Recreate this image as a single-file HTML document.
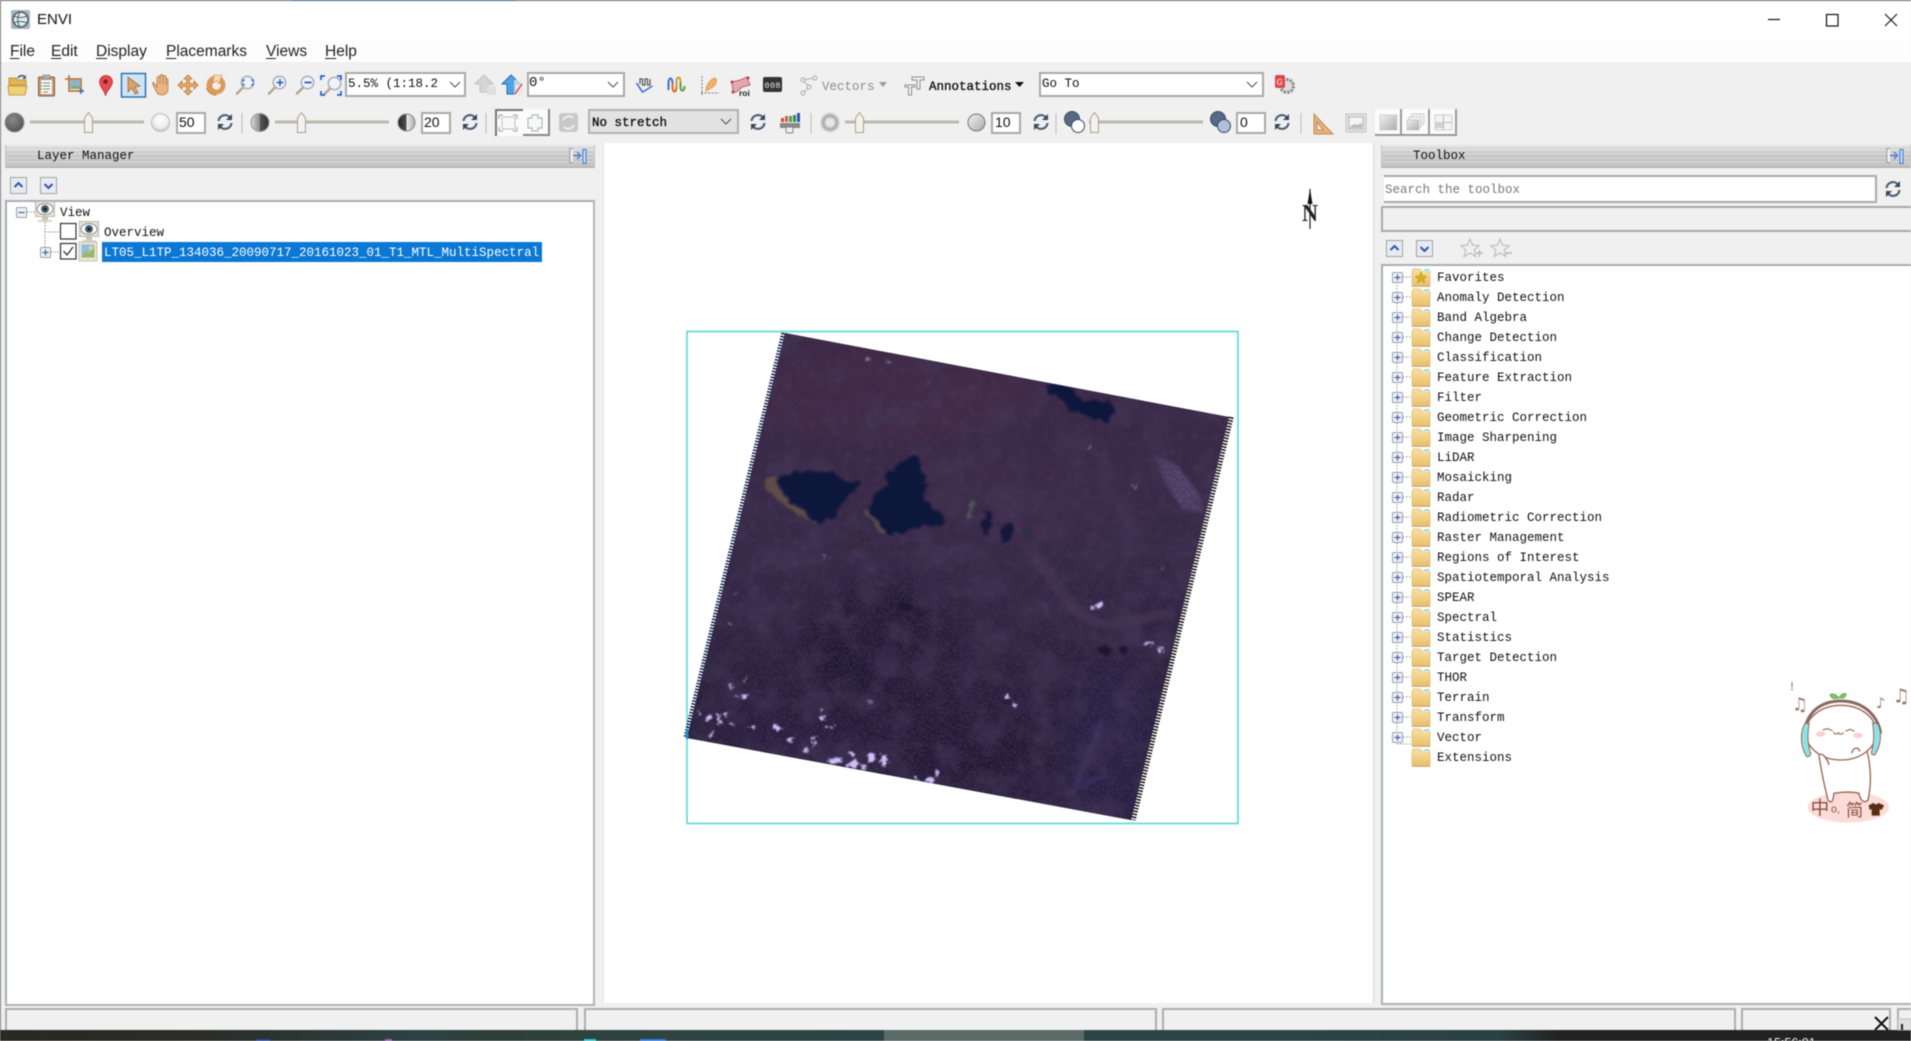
<!DOCTYPE html>
<html lang="en"><head><meta charset="utf-8"><title>ENVI</title>
<style>
html,body{margin:0;padding:0;width:1911px;height:1041px;overflow:hidden;background:#f0f0f0}
#r{position:absolute;left:0;top:0;width:1911px;height:1041px;overflow:hidden;background:#f0f0f0;filter:blur(.45px)}
#r div{position:absolute;box-sizing:border-box}
.t{font:12.5px/20px "Liberation Mono",monospace;color:#111;white-space:pre;margin-top:1px}
.m{font:15.5px/20px "Liberation Sans",sans-serif;color:#222;white-space:pre;top:42px}
.m u{text-underline-offset:2px}
.hd{background:linear-gradient(180deg,rgba(255,255,255,.35),rgba(0,0,0,.03) 50%,rgba(0,0,0,.05)),repeating-linear-gradient(180deg,#dadada 0 2px,#cbcbcb 2px 4px);border:1px solid #c4c4c4;border-bottom:2px solid #b4b4b4;border-top:1px solid #eee}
.box{background:#fff;border:2px solid #a9a9a9}
.tree{background:#fff;border:2px solid #a9adb3;border-right-color:#b4b4b4;border-bottom-color:#b0b0b0}
.st{border:2px solid #adadad;border-bottom:0;background:#f0f0f0;top:1008px;height:24px}
.n{font:14px/20px "Liberation Sans",sans-serif;color:#111;white-space:pre;top:112px}
svg{position:absolute;left:0;top:0}
</style></head><body>
<div id="r">
<!-- title + menu -->
<div style="left:0;top:0;width:1911px;height:40px;background:#fff"></div>
<div style="left:0;top:40px;width:1911px;height:22px;background:#fdfdfd"></div>
<div style="left:0;top:0;width:1911px;height:1px;background:#666"></div>
<div style="left:292px;top:0;width:224px;height:1px;background:#25527a"></div>
<div style="left:0;top:0;width:1px;height:1030px;background:#777"></div>
<div style="left:37px;top:10px;font:15px/20px 'Liberation Sans',sans-serif;color:#111">ENVI</div>
<div class="m" style="left:10px"><u>F</u>ile</div>
<div class="m" style="left:51px"><u>E</u>dit</div>
<div class="m" style="left:96px"><u>D</u>isplay</div>
<div class="m" style="left:166px"><u>P</u>lacemarks</div>
<div class="m" style="left:266px"><u>V</u>iews</div>
<div class="m" style="left:325px"><u>H</u>elp</div>

<!-- canvas -->
<div style="left:603px;top:143px;width:771px;height:860px;background:#fff;border-left:1px solid #e6e6e6;border-right:1px solid #d8d8d8"></div>

<!-- combos -->
<div class="box" style="left:345px;top:72px;width:121px;height:25px"></div>
<div class="t" style="left:348px;top:73px;width:92px;overflow:hidden">5.5% (1:18.2)</div>
<div class="box" style="left:527px;top:72px;width:98px;height:25px"></div>
<div class="t" style="left:529px;top:72px;font-size:14px">0°</div>
<div class="box" style="left:1039px;top:72px;width:225px;height:25px"></div>
<div class="t" style="left:1042px;top:73px">Go To</div>
<div style="left:588px;top:109px;width:151px;height:25px;background:#e2e2e2;border:2px solid #b2b2b2"></div>
<div class="t" style="left:592px;top:112px;-webkit-text-stroke:.35px #111">No stretch</div>
<div class="t" style="left:822px;top:76px;color:#8d8d8d">Vectors</div>
<div class="t" style="left:929px;top:76px;color:#111;-webkit-text-stroke:.35px #111">Annotations</div>

<!-- inputs -->
<div class="box" style="left:176px;top:112px;width:30px;height:22px"></div><div class="n" style="left:179px">50</div>
<div class="box" style="left:421px;top:112px;width:30px;height:22px"></div><div class="n" style="left:424px">20</div>
<div class="box" style="left:991px;top:112px;width:30px;height:22px"></div><div class="n" style="left:995px">10</div>
<div class="box" style="left:1236px;top:112px;width:30px;height:22px"></div><div class="n" style="left:1240px">0</div>
<!-- toggle buttons -->
<div style="left:495px;top:109px;width:28px;height:27px;background:#fbfbfb;border-left:2px solid #777;border-top:2px solid #777"></div>
<div style="left:523px;top:109px;width:27px;height:27px;background:#fbfbfb;border-right:2px solid #888;border-bottom:2px solid #888"></div>
<div style="left:1375px;top:109px;width:27px;height:27px;background:#fbfbfb;border-right:2px solid #999;border-bottom:2px solid #999"></div>
<div style="left:1402px;top:109px;width:28px;height:27px;background:#fbfbfb;border-right:2px solid #999;border-bottom:2px solid #999"></div>
<div style="left:1430px;top:109px;width:27px;height:27px;background:#fbfbfb;border-right:2px solid #999;border-bottom:2px solid #999"></div>

<!-- Left panel -->
<div class="hd" style="left:5px;top:144px;width:590px;height:24px"></div>
<div class="t" style="left:37px;top:145px">Layer Manager</div>
<div class="tree" style="left:5px;top:200px;width:590px;height:806px"></div>
<div style="left:102px;top:242px;width:440px;height:20px;background:#0a78d4"></div>
<div class="t" style="left:60px;top:202px">View</div>
<div class="t" style="left:104px;top:222px">Overview</div>
<div class="t" style="left:104px;top:242px;color:#fff">LT05_L1TP_134036_20090717_20161023_01_T1_MTL_MultiSpectral</div>

<!-- Right panel -->
<div class="hd" style="left:1381px;top:144px;width:530px;height:24px"></div>
<div class="t" style="left:1413px;top:145px">Toolbox</div>
<div style="left:1384px;top:175px;width:493px;height:28px;background:#fff;border-top:2px solid #a9a9a9;border-right:2px solid #a9a9a9;border-bottom:2px solid #a9a9a9"></div>
<div class="t" style="left:1385px;top:179px;color:#777">Search the toolbox</div>
<div style="left:1381px;top:206px;width:530px;height:26px;border:2px solid #a9a9a9;border-right:0;background:#f0f0f0"></div>
<div class="tree" style="left:1381px;top:264px;width:532px;height:741px"></div>
<div class="t" style="left:1437px;top:267px">Favorites</div>
<div class="t" style="left:1437px;top:287px">Anomaly Detection</div>
<div class="t" style="left:1437px;top:307px">Band Algebra</div>
<div class="t" style="left:1437px;top:327px">Change Detection</div>
<div class="t" style="left:1437px;top:347px">Classification</div>
<div class="t" style="left:1437px;top:367px">Feature Extraction</div>
<div class="t" style="left:1437px;top:387px">Filter</div>
<div class="t" style="left:1437px;top:407px">Geometric Correction</div>
<div class="t" style="left:1437px;top:427px">Image Sharpening</div>
<div class="t" style="left:1437px;top:447px">LiDAR</div>
<div class="t" style="left:1437px;top:467px">Mosaicking</div>
<div class="t" style="left:1437px;top:487px">Radar</div>
<div class="t" style="left:1437px;top:507px">Radiometric Correction</div>
<div class="t" style="left:1437px;top:527px">Raster Management</div>
<div class="t" style="left:1437px;top:547px">Regions of Interest</div>
<div class="t" style="left:1437px;top:567px">Spatiotemporal Analysis</div>
<div class="t" style="left:1437px;top:587px">SPEAR</div>
<div class="t" style="left:1437px;top:607px">Spectral</div>
<div class="t" style="left:1437px;top:627px">Statistics</div>
<div class="t" style="left:1437px;top:647px">Target Detection</div>
<div class="t" style="left:1437px;top:667px">THOR</div>
<div class="t" style="left:1437px;top:687px">Terrain</div>
<div class="t" style="left:1437px;top:707px">Transform</div>
<div class="t" style="left:1437px;top:727px">Vector</div>
<div class="t" style="left:1437px;top:747px">Extensions</div>

<!-- status -->
<div class="st" style="left:5px;width:573px"></div>
<div class="st" style="left:584px;width:573px"></div>
<div class="st" style="left:1162px;width:574px"></div>
<div class="st" style="left:1741px;width:150px"></div>
<div class="st" style="left:1897px;width:20px"></div>

<!-- taskbar -->
<div style="left:0;top:1030px;width:1911px;height:11px;background:linear-gradient(90deg,#2b2924 0,#2a2d28 200px,#2d4243 420px,#2e3f38 500px,#2f4544 700px,#2d4444 1300px,#2b4041 1500px,#222 1560px,#222 100%)"></div>
<div style="left:884px;top:1030px;width:200px;height:11px;background:#5c6a68"></div>
<div style="left:1767px;top:1036px;color:#eee;font:12.5px/14px 'Liberation Sans',sans-serif;white-space:pre">15:56:01</div>
<div style="left:256px;top:1039px;width:14px;height:2px;background:#26479c"></div>
<div style="left:385px;top:1039px;width:7px;height:2px;background:#a45ac0"></div>
<div style="left:584px;top:1039px;width:12px;height:2px;background:#28c8d8"></div>
<div style="left:640px;top:1039px;width:26px;height:2px;background:#2a7ae4"></div>

<svg width="1911" height="1041" viewBox="0 0 1911 1041" xmlns="http://www.w3.org/2000/svg">
<defs>
<linearGradient id="fg" x1="0" y1="0" x2="0" y2="1"><stop offset="0" stop-color="#f8e2a4"/><stop offset="1" stop-color="#e8c06a"/></linearGradient>
<linearGradient id="sat" x1="0" y1="0" x2="0" y2="1"><stop offset="0" stop-color="#472e4e"/><stop offset=".45" stop-color="#3c2d4e"/><stop offset=".75" stop-color="#2a2140"/><stop offset="1" stop-color="#2b2244"/></linearGradient>
<radialGradient id="ball" cx=".4" cy=".35" r=".8"><stop offset="0" stop-color="#8a8a8a"/><stop offset="1" stop-color="#4a4a4a"/></radialGradient>
<radialGradient id="wball" cx=".5" cy=".35" r=".7"><stop offset="0" stop-color="#fff"/><stop offset=".6" stop-color="#eee"/><stop offset="1" stop-color="#bbb"/></radialGradient>
<linearGradient id="hcirc" x1="0" x2="1"><stop offset="0" stop-color="#ddd"/><stop offset=".5" stop-color="#888"/><stop offset=".5" stop-color="#555"/><stop offset="1" stop-color="#333"/></linearGradient>
<linearGradient id="ccirc" x1="0" x2="1"><stop offset="0" stop-color="#222"/><stop offset=".5" stop-color="#555"/><stop offset=".5" stop-color="#eee"/><stop offset="1" stop-color="#aaa"/></linearGradient>
<linearGradient id="gr" x1="0" y1="0" x2="1" y2="1"><stop offset="0" stop-color="#f2f2f2"/><stop offset="1" stop-color="#aaa"/></linearGradient>
<clipPath id="q"><polygon points="785,333 1229,417 1131,820 687,738"/></clipPath>
<filter id="nz" x="0" y="0" width="100%" height="100%"><feTurbulence type="fractalNoise" baseFrequency=".42" numOctaves="2" seed="7"/><feColorMatrix values="0 0 0 0 .05 0 0 0 0 .03 0 0 0 0 .08 2.6 0 0 0 -.95"/></filter>
<filter id="nc" x="0" y="0" width="100%" height="100%"><feTurbulence type="fractalNoise" baseFrequency=".035" numOctaves="4" seed="12"/><feColorMatrix values="0 0 0 0 .06 0 0 0 0 .04 0 0 0 0 .1 2.8 0 0 0 -1.1"/></filter>
<filter id="nl" x="0" y="0" width="100%" height="100%"><feTurbulence type="fractalNoise" baseFrequency=".12" numOctaves="2" seed="21"/><feColorMatrix values="0 0 0 0 .5 0 0 0 0 .4 0 0 0 0 .65 1.6 0 0 0 -.72"/></filter>
<filter id="b1" x="-30%" y="-30%" width="160%" height="160%"><feGaussianBlur stdDeviation="1"/></filter>
<filter id="b4" x="-50%" y="-50%" width="200%" height="200%"><feGaussianBlur stdDeviation="5"/></filter>
<filter id="b12" x="-60%" y="-60%" width="220%" height="220%"><feGaussianBlur stdDeviation="26"/></filter>
<filter id="lk" x="-10%" y="-10%" width="120%" height="120%"><feTurbulence type="fractalNoise" baseFrequency=".05" numOctaves="3" seed="5" result="n"/><feDisplacementMap in="SourceGraphic" in2="n" scale="22" xChannelSelector="R" yChannelSelector="G"/><feGaussianBlur stdDeviation="3.5"/></filter>
<filter id="cl" x="-5%" y="-5%" width="110%" height="110%"><feTurbulence type="fractalNoise" baseFrequency=".09" numOctaves="3" seed="9" result="n"/><feDisplacementMap in="SourceGraphic" in2="n" scale="28" xChannelSelector="R" yChannelSelector="G"/><feGaussianBlur stdDeviation="2.2"/></filter>
<symbol id="folder" viewBox="0 0 20 19" width="20" height="19"><path d="M1 4V18H19V3H11L9 1H2Z" fill="url(#fg)" stroke="#d8b878" stroke-width=".7"/><path d="M11 2.500L17 1l2 2-6 1z" fill="#e4f4f8"/><path d="M13 2.300l5-.6" stroke="#58c0d0" stroke-width="1"/><path d="M1 18.400H19" stroke="#b89858" stroke-width=".8"/></symbol>
<symbol id="exp" viewBox="0 0 11 11" width="11" height="11"><rect x=".5" y=".5" width="10" height="10" rx="1" fill="#eef0f4" stroke="#9aa0aa"/><path d="M2.500 5.500h6M5.500 2.500v6" stroke="#4460a8" stroke-width="1.200"/></symbol>
<symbol id="col" viewBox="0 0 11 11" width="11" height="11"><rect x=".5" y=".5" width="10" height="10" rx="1" fill="#eef0f4" stroke="#9aa0aa"/><path d="M2.500 5.500h6" stroke="#4460a8" stroke-width="1.200"/></symbol>
<symbol id="ref" viewBox="0 0 18 18" width="18" height="18"><path d="M2.500 8A6.500 6.500 0 0 1 14 4.500" fill="none" stroke="#4b6278" stroke-width="2.200"/><path d="M15.500 10A6.500 6.500 0 0 1 4 13.500" fill="none" stroke="#4b6278" stroke-width="2.200"/><path d="M16 1v6h-6z" fill="#33485e"/><path d="M2 17v-6h6z" fill="#33485e"/></symbol>
<symbol id="mag" viewBox="0 0 20 20" width="20" height="20"><circle cx="12.500" cy="7.500" r="6.200" fill="#eef3f8" stroke="#a9b3be" stroke-width="1.600"/><path d="M8 12.500L2 18.500" stroke="#b9a68e" stroke-width="2.600" stroke-linecap="round"/></symbol>
<symbol id="thumb" viewBox="0 0 9 21" width="9" height="21"><path d="M4.500 .5L8.500 6V20.500H.5V6Z" fill="#f2f2ec" stroke="#a5a292"/></symbol>
<symbol id="dock" viewBox="0 0 19 18" width="19" height="18"><path d="M4 15.500H.8V1.500H4" fill="#eee" stroke="#999"/><path d="M4 8.500h7M8 5l3.500 3.500L8 12" fill="none" stroke="#4a80d8" stroke-width="1.400"/><rect x="14" y="2.500" width="3" height="14" fill="#cfe0f6" stroke="#3a78d8"/></symbol>
<symbol id="chev" viewBox="0 0 12 8" width="12" height="8"><path d="M1 1l5 5 5-5" fill="none" stroke="#555" stroke-width="1.100"/></symbol>
<symbol id="btnu" viewBox="0 0 17 17" width="17" height="17"><rect x=".5" y=".5" width="16" height="16" fill="#e8ebf2" stroke="#a2a2a8"/><path d="M4.500 10l4-4 4 4" fill="none" stroke="#2f56b0" stroke-width="2"/></symbol>
<symbol id="btnd" viewBox="0 0 17 17" width="17" height="17"><rect x=".5" y=".5" width="16" height="16" fill="#e8ebf2" stroke="#a2a2a8"/><path d="M4.500 7l4 4 4-4" fill="none" stroke="#2f56b0" stroke-width="2"/></symbol>
<symbol id="eye" viewBox="0 0 20 22" width="20" height="22"><rect x=".5" y=".5" width="19" height="15" fill="#e8e4da" stroke="#bcb8ac"/><ellipse cx="10" cy="8" rx="8" ry="5.500" fill="#fff" stroke="#888"/><circle cx="10" cy="8" r="4" fill="#4a6272"/><circle cx="10" cy="8" r="1.600" fill="#17232c"/><rect x="7" y="16" width="6" height="3" fill="#c8c4b8"/><rect x="3" y="19" width="14" height="2" fill="#d8d4c8"/></symbol>
<symbol id="star" viewBox="0 0 20 20" width="20" height="20"><path d="M10 1l2.600 6.200 6.600.5-5 4.300 1.600 6.500L10 15l-5.800 3.500 1.600-6.500-5-4.300 6.600-.5z" fill="#f0f0f0" stroke="#c4c4c4" stroke-width="1.400"/></symbol>
</defs>

<!-- ENVI icon -->
<rect x="11" y="10" width="19" height="19" rx="2" fill="#a8b4bc"/><circle cx="20.500" cy="19.500" r="7.500" fill="#e8ecee" stroke="#47606e" stroke-width="1.500"/><path d="M13 16c6 2 10 2 15 0M20 12c-3 5-3 10 0 15M13.500 23c4-2 9-2 14 0" fill="none" stroke="#47606e"/>
<!-- win controls -->
<path d="M1768 19.500h12" stroke="#111" stroke-width="1.200"/>
<rect x="1826.500" y="14.500" width="11.500" height="11.500" fill="none" stroke="#111" stroke-width="1.200"/>
<path d="M1885 14l12 12M1897 14l-12 12" stroke="#111" stroke-width="1.100"/>

<!-- Toolbar row 1 -->
<g><path d="M9 78h7l2 2h8v5H9z" fill="#e2b653" stroke="#a98534" stroke-width=".8"/><path d="M8 86h19l-2 9H9z" fill="#f0d072" stroke="#b38d3a" stroke-width=".8"/><path d="M18 78c2-3 5-3 7-1" fill="none" stroke="#4d6578" stroke-width="1.800"/><path d="M26 75v4h-4z" fill="#4d6578"/></g>
<g><rect x="38.500" y="77" width="16" height="19" rx="1" fill="#c89878" stroke="#8a5a3a"/><rect x="41" y="80" width="11" height="14" fill="#f8f8f4"/><rect x="43" y="75" width="7" height="4" fill="#a9afb4" stroke="#777" stroke-width=".5"/><path d="M43 83h7M43 86h7M43 89h7M43 92h5" stroke="#7a8a78"/><path d="M41 83h1M41 86h1M41 89h1" stroke="#3ca050"/></g>
<g><rect x="70" y="80" width="10" height="9" fill="#8fb4d2"/><path d="M70 89l4-4 3 2 3-2v4z" fill="#86a86c"/><path d="M65 79h16v13M69 75v16h15" fill="none" stroke="#b87a44" stroke-width="1.700"/><path d="M81 88v6M79 91h5" stroke="#3a6ac0" stroke-width="1.500"/></g>
<g><path d="M105.500 96c-1-6-6-9-6-14a6 6 0 0 1 13 0c0 5-6 8-7 14z" fill="#e84a4c" stroke="#b02a2c" stroke-width=".7"/><circle cx="105.500" cy="81.500" r="2.300" fill="#7a2030"/></g>
<g><rect x="121.500" y="73.500" width="24" height="23.500" fill="#cfe4f7" stroke="#1d6fb2" stroke-width="1.400"/><path d="M128 77v15l4-4 3 6 3-1-3-6 5-1z" fill="#dba467" stroke="#a36c34" stroke-width=".8"/></g>
<g><path d="M155 84c-2-3-3-1-2 1l3 6c1 3 3 4 6 4s6-2 6-6v-9c0-2-2-2-2 0v5-8c0-2-3-2-3 0v7-8c0-2-3-2-3 0v8-6c0-2-3-2-3 0v9z" fill="#e9b583" stroke="#b37a48" stroke-width=".8"/></g>
<g><path d="M188 75l4 4h-2.500v4.500H194V81l4 4-4 4v-2.500h-4.500V91H192l-4 4-4-4h2.500v-4.500H182V89l-4-4 4-4v2.500h4.500V79H184z" fill="#e9a862" stroke="#b67c3c" stroke-width=".8"/></g>
<g><circle cx="216" cy="85" r="9.500" fill="#dd9a58"/><circle cx="216.500" cy="85.500" r="4.200" fill="#f4f0e8"/><path d="M214 75h8l-3 9-2-3-4 2z" fill="#f6d8b4" stroke="#c98a4a" stroke-width=".6"/><path d="M206.500 88c2 5 6 7 10 7" fill="none" stroke="#b4743a"/></g>
<use href="#mag" x="235" y="75"/><path d="M244 80h-2v2M250 80h2v2M244 85h-2v-2M250 85h2v-2" fill="none" stroke="#3358c0" transform="translate(1 0)"/>
<use href="#mag" x="267" y="75"/><path d="M276.500 82.500h7M280 79v7" stroke="#3358c0" stroke-width="1.500"/>
<use href="#mag" x="295" y="75"/><path d="M304.500 82.500h7" stroke="#3358c0" stroke-width="1.800"/>
<use href="#mag" x="322" y="76"/><path d="M321 80v-4h4M341 80v-4h-4M321 91v4h4M341 91v4h-4" fill="none" stroke="#2b63d8" stroke-width="1.800"/>
<use href="#chev" x="449" y="81"/><use href="#chev" x="607" y="81"/><use href="#chev" x="1246" y="81"/><use href="#chev" x="720" y="118"/>
<g><path d="M484 75l-9 9h5v8h8v-8h5z" fill="#d6d6d6" stroke="#c0c0c0"/><rect x="487" y="86" width="9" height="9" fill="#e0e0e0"/></g>
<g><path d="M511 75l-9 9h5v10h8V84h5z" fill="#4fa3e6" stroke="#1f6db0"/><path d="M514 80h9v15h-9z" fill="#e8e8e8" opacity=".75"/><path d="M515 94l7-10" stroke="#d24a3a" stroke-width="1.400"/></g>
<g fill="none"><path d="M640 84v-5h2.500v6h2.500v-6h2.500v6h2.500v-6" stroke="#555" stroke-width="1.200"/><path d="M636.500 83l6 9 10-6" stroke="#4a70d8" stroke-width="1.600"/></g>
<g fill="none" stroke-width="2"><path d="M668.500 90v-7c0-6 4-6 4 0" stroke="#3d70d8"/><path d="M672.500 83v4c0 6 4 6 4 0" stroke="#e06a20"/><path d="M676.500 87v-5c0-6 4-6 4 0" stroke="#c9a03a"/><path d="M680.500 82v5c0 5 4 5 4-1" stroke="#5aa040"/></g>
<path d="M702 76v19M701 93h18" stroke="#777" stroke-dasharray="2 1.500"/><path d="M706 91c0-5 4-12 9-13 3 2 1 8-4 10z" fill="#f2b066" stroke="#e8994e"/>
<path d="M732 82l8-2 7-3 3 8-8 2-4 4-5 2z" fill="#e4a8ae" stroke="#bc6472"/><circle cx="732" cy="82" r="1.500" fill="#c03a50"/><circle cx="748" cy="78" r="1.500" fill="#c03a50"/><circle cx="733" cy="92" r="1.500" fill="#c03a50"/>
<text x="739" y="96" font-family="Liberation Sans,sans-serif" font-size="8.500" font-weight="bold" fill="#222">roi</text>
<rect x="763" y="77" width="19" height="15" rx="2" fill="#333"/><text x="764.500" y="88" font-family="Liberation Mono,monospace" font-size="8.500" fill="#eee" textLength="16">008</text>
<path d="M803 80l12-2M803 80l6 7-6 6" fill="none" stroke="#b8b8b8" stroke-width="1.200"/><circle cx="803" cy="80" r="2" fill="#f0f0f0" stroke="#aaa"/><circle cx="815" cy="78" r="2" fill="#f0f0f0" stroke="#aaa"/><circle cx="809" cy="87" r="2" fill="#f0f0f0" stroke="#aaa"/><circle cx="803" cy="93" r="2" fill="#f0f0f0" stroke="#aaa"/>
<path d="M879 82h8l-4 5z" fill="#9a9a9a"/>
<path d="M912 77h12v3h-4v9h-3v-9h-5zM905 85h10v2h-3.500v8h-3v-8H905z" fill="#f4f4f4" stroke="#8d8d8d"/>
<path d="M1015 82h9l-4.500 5z" fill="#111"/>
<!-- red gear -->
<circle cx="1287" cy="86" r="6.500" fill="#ddd" stroke="#8d8d8d" stroke-width="3" stroke-dasharray="2.500 1.200"/><rect x="1275" y="75" width="10" height="13" rx="2" fill="#e0454a"/><text x="1276.500" y="85" font-family="Liberation Sans,sans-serif" font-size="8" fill="#fff">G</text>

<!-- row 2 -->
<circle cx="14.500" cy="122.500" r="9.500" fill="url(#ball)" stroke="#999"/>
<rect x="30" y="120.500" width="114" height="3" fill="#bcb9ac"/><use href="#thumb" x="84" y="112"/>
<circle cx="160.500" cy="122.500" r="9" fill="url(#wball)" stroke="#bbb"/>
<use href="#ref" x="216" y="113"/><path d="M242 113v21" stroke="#bbb"/>
<circle cx="260" cy="122.500" r="9" fill="url(#hcirc)" stroke="#999"/>
<rect x="275" y="120.500" width="114" height="3" fill="#bcb9ac"/><use href="#thumb" x="297" y="112"/>
<circle cx="406.500" cy="122.500" r="8.500" fill="url(#ccirc)" stroke="#888"/>
<use href="#ref" x="461" y="113"/><path d="M486 113v21" stroke="#bbb"/>
<path d="M499 115v4M499 115h4M517 115v4M517 115h-4M499 131v-4M499 131h4M517 131v-4M517 131h-4" stroke="#aab" fill="none" stroke-width="1.200"/><rect x="502" y="117" width="13" height="12" rx="1" fill="#f8f8f8" stroke="#bcc0c4"/>
<path d="M528 118h4v-3h6v3h4v10h-4v3h-6v-3h-4z" fill="#f8f8f8" stroke="#b4b8bc" stroke-width="1.200"/>
<rect x="559" y="113" width="19" height="19" rx="3" fill="#c8c8c8"/><path d="M563 120c2-4 7-5 10-2M574 125c-2 4-7 5-10 2" fill="none" stroke="#eee" stroke-width="2"/>
<use href="#ref" x="749" y="113"/>
<g><rect x="781" y="118" width="3" height="4" fill="#d0453a"/><rect x="785" y="116" width="3" height="6" fill="#d0653a"/><rect x="789" y="116" width="3" height="6" fill="#4aa04a"/><rect x="793" y="115" width="3" height="7" fill="#3a8a4a"/><rect x="797" y="113" width="3" height="9" fill="#3050c0"/><rect x="780" y="123" width="20" height="5" fill="#888"/><rect x="786" y="127" width="7" height="6" rx="1.500" fill="#eee" stroke="#888"/></g>
<path d="M811 113v21" stroke="#bbb"/>
<circle cx="830" cy="122.500" r="7" fill="#e8e8e8" stroke="#a4a4a4" stroke-width="3.500" filter="url(#b1)"/>
<rect x="845" y="120.500" width="114" height="3" fill="#bcb9ac"/><use href="#thumb" x="855" y="112"/>
<circle cx="976.500" cy="122.500" r="8.500" fill="url(#gr)" stroke="#777"/>
<use href="#ref" x="1032" y="113"/><path d="M1056 113v21" stroke="#bbb"/>
<circle cx="1072" cy="119" r="7.500" fill="#566a86" stroke="#3a4a60"/><circle cx="1078" cy="126" r="6.500" fill="#fff" stroke="#3a4a60"/>
<rect x="1089" y="120.500" width="114" height="3" fill="#bcb9ac"/><use href="#thumb" x="1090" y="112"/>
<circle cx="1218" cy="119" r="7.500" fill="#566a86" stroke="#3a4a60"/><circle cx="1224" cy="126" r="6.500" fill="#b0c0d8" stroke="#3a4a60"/>
<use href="#ref" x="1273" y="113"/><path d="M1301 113v21" stroke="#bbb"/>
<path d="M1314 114v20h19l-3-3zM1317 122l6 8h-6z" fill="#e5b27a" stroke="#c08a50" fill-rule="evenodd"/>
<rect x="1346" y="114" width="20" height="18" fill="#e0e0e0" stroke="#c4c4c4"/><rect x="1349" y="117" width="14" height="12" fill="#f4f4f4" stroke="#999" stroke-dasharray="1.500 1"/><path d="M1350 127l4-3 3 1 5-2v5h-12z" fill="#bbb"/>
<rect x="1380" y="115" width="17" height="15" fill="url(#gr)" stroke="#d0d0d0"/>
<rect x="1412" y="114" width="12" height="10" fill="#f4f4f4" stroke="#ccc"/><rect x="1409" y="117" width="12" height="10" fill="#f4f4f4" stroke="#ccc"/><rect x="1407" y="120" width="12" height="10" fill="url(#gr)" stroke="#ccc"/>
<rect x="1435" y="115" width="17" height="15" fill="#f4f4f4" stroke="#d0d0d0"/><path d="M1443.500 115v15M1435 122.500h17" stroke="#bbb"/><rect x="1435" y="122" width="8" height="6" fill="#d0d0d0"/>

<!-- panel widgets -->
<use href="#dock" x="569" y="147"/><use href="#dock" x="1886" y="147"/>
<use href="#btnu" x="10" y="177"/><use href="#btnd" x="40" y="177"/>
<use href="#btnu" x="1386" y="240"/><use href="#btnd" x="1416" y="240"/>
<use href="#star" x="1460" y="238"/><use href="#star" x="1490" y="238"/>
<path d="M1476 253h7M1479.500 250v7M1505 253h7" stroke="#b8b8b8" stroke-width="1.400"/>
<use href="#ref" x="1884" y="180"/>

<!-- left tree -->
<path d="M27 212h8M45 222v30M45 232h15M51 252h9" stroke="#888" stroke-dasharray="1.500 1.500" fill="none"/>
<use href="#col" x="16" y="207"/><use href="#eye" x="35" y="201"/>
<rect x="60.500" y="223.500" width="15.500" height="15.500" fill="#fff" stroke="#333" stroke-width="1.200"/><use href="#eye" x="79" y="221"/>
<use href="#exp" x="40" y="247"/>
<rect x="60.500" y="243.500" width="15.500" height="15.500" fill="#fff" stroke="#333" stroke-width="1.200"/><path d="M63.500 251l3.500 4 6-8" fill="none" stroke="#333" stroke-width="1.300"/>
<rect x="79" y="242" width="18" height="19" fill="#e8e4da" stroke="#c8c4b8"/><rect x="81.500" y="244.500" width="13" height="13" fill="#8fc0e0"/><path d="M81.500 257.500l4-7 4 3 5-6v10z" fill="#9ab860"/><circle cx="91" cy="248" r="2" fill="#f4d860"/>

<!-- right tree -->
<g stroke="#999" stroke-dasharray="1.500 1.500" fill="none"><path d="M1397 282v462h14"/></g>
<g stroke="#999" fill="none" stroke-dasharray="1.500 1.500"><path d="M1403 277h8M1403 297h8M1403 317h8M1403 337h8M1403 357h8M1403 377h8M1403 397h8M1403 417h8M1403 437h8M1403 457h8M1403 477h8M1403 497h8M1403 517h8M1403 537h8M1403 557h8M1403 577h8M1403 597h8M1403 617h8M1403 637h8M1403 657h8M1403 677h8M1403 697h8M1403 717h8M1403 737h8"/></g>
<use href="#exp" x="1392" y="272"/><use href="#exp" x="1392" y="292"/><use href="#exp" x="1392" y="312"/><use href="#exp" x="1392" y="332"/><use href="#exp" x="1392" y="352"/><use href="#exp" x="1392" y="372"/><use href="#exp" x="1392" y="392"/><use href="#exp" x="1392" y="412"/><use href="#exp" x="1392" y="432"/><use href="#exp" x="1392" y="452"/><use href="#exp" x="1392" y="472"/><use href="#exp" x="1392" y="492"/><use href="#exp" x="1392" y="512"/><use href="#exp" x="1392" y="532"/><use href="#exp" x="1392" y="552"/><use href="#exp" x="1392" y="572"/><use href="#exp" x="1392" y="592"/><use href="#exp" x="1392" y="612"/><use href="#exp" x="1392" y="632"/><use href="#exp" x="1392" y="652"/><use href="#exp" x="1392" y="672"/><use href="#exp" x="1392" y="692"/><use href="#exp" x="1392" y="712"/><use href="#exp" x="1392" y="732"/>
<use href="#folder" x="1411" y="268"/><use href="#folder" x="1411" y="288"/><use href="#folder" x="1411" y="308"/><use href="#folder" x="1411" y="328"/><use href="#folder" x="1411" y="348"/><use href="#folder" x="1411" y="368"/><use href="#folder" x="1411" y="388"/><use href="#folder" x="1411" y="408"/><use href="#folder" x="1411" y="428"/><use href="#folder" x="1411" y="448"/><use href="#folder" x="1411" y="468"/><use href="#folder" x="1411" y="488"/><use href="#folder" x="1411" y="508"/><use href="#folder" x="1411" y="528"/><use href="#folder" x="1411" y="548"/><use href="#folder" x="1411" y="568"/><use href="#folder" x="1411" y="588"/><use href="#folder" x="1411" y="608"/><use href="#folder" x="1411" y="628"/><use href="#folder" x="1411" y="648"/><use href="#folder" x="1411" y="668"/><use href="#folder" x="1411" y="688"/><use href="#folder" x="1411" y="708"/><use href="#folder" x="1411" y="728"/><use href="#folder" x="1411" y="748"/>
<path d="M1421 272l1.800 4 4.200.3-3.200 2.700 1 4-3.800-2.300-3.800 2.300 1-4-3.200-2.700 4.200-.3z" fill="#d8b020" stroke="#b89010" stroke-width=".5"/>

<!-- north arrow on map -->
<path d="M1310 189v40" stroke="#222" stroke-width="1.200"/><path d="M1310 189l-2.500 15h5z" fill="#111"/>
<text x="1302" y="221" font-family="Liberation Serif,serif" font-weight="bold" font-size="24" fill="#222" textLength="16" lengthAdjust="spacingAndGlyphs">N</text>

<!-- image frame -->
<rect x="687" y="331.500" width="551" height="492" fill="#fff" stroke="#64dcdc" stroke-width="1.800"/>

<!-- comb edges (behind image) -->
<path d="M783.500 333L685.500 738" stroke="#1a2c58" stroke-width="4.500" stroke-dasharray="1.600 1.400" fill="none"/>
<path d="M1231 417L1133 820" stroke="#221a1e" stroke-width="5.500" stroke-dasharray="1.600 1.400" fill="none"/>

<!-- satellite image -->
<g clip-path="url(#q)">
<rect x="680" y="330" width="560" height="495" fill="url(#sat)"/>
<g transform="translate(670,320) scale(.38265,.33333)">
<ellipse cx="560" cy="230" rx="400" ry="130" fill="#5a3148" opacity=".45" filter="url(#b12)"/>
<ellipse cx="900" cy="520" rx="380" ry="120" fill="#4b3250" opacity=".5" filter="url(#b12)"/>
<ellipse cx="550" cy="1000" rx="200" ry="220" fill="#1c1530" opacity=".7" filter="url(#b12)"/>
<ellipse cx="800" cy="1290" rx="220" ry="120" fill="#1c1530" opacity=".6" filter="url(#b12)"/>
<ellipse cx="1150" cy="1300" rx="120" ry="260" fill="#2c2650" opacity=".7" filter="url(#b12)"/>
<path d="M960 720C1010 790 1040 860 1100 900S1250 880 1320 880" fill="none" stroke="#55405f" stroke-width="30" opacity=".7" filter="url(#b4)"/>
<path d="M830 510C900 620 930 690 990 740" fill="none" stroke="#4f3a5c" stroke-width="40" opacity=".5" filter="url(#b4)"/>
<path d="M1265 405L1320 430 1385 525 1395 580 1340 570 1295 490Z" fill="#7a6494" opacity=".75" filter="url(#b4)"/>
<path d="M1060 1400L1130 1200" stroke="#5752a0" stroke-width="14" opacity=".5" filter="url(#b4)"/>
<path d="M1030 1430c30-20 80-60 110-60" fill="none" stroke="#5752a0" stroke-width="10" opacity=".5" filter="url(#b4)"/>
<ellipse cx="570" cy="1020" rx="35" ry="50" fill="#5c4a78" opacity=".3" filter="url(#b4)"/>
<ellipse cx="730" cy="1310" rx="40" ry="30" fill="#4a3c68" opacity=".35" filter="url(#b4)"/>
<ellipse cx="490" cy="660" rx="28" ry="40" fill="#3a2a38" opacity=".7" filter="url(#b4)"/>
</g>
<rect x="680" y="330" width="560" height="495" fill="#191226" opacity=".2"/>
<rect x="680" y="330" width="560" height="495" filter="url(#nc)" opacity=".6"/>
<rect x="680" y="330" width="560" height="495" filter="url(#nl)" opacity=".1"/>
<rect x="680" y="330" width="560" height="495" filter="url(#nz)" opacity=".75"/>
<g transform="translate(670,320) scale(.38265,.33333)">
<g filter="url(#lk)">
<path d="M248 478L277 472 292 520 342 570 388 612 345 590 290 548 256 512Z" fill="#5f4c46"/>
<path d="M503 575L530 568 552 590 575 642 545 642 530 600Z" fill="#5a5048"/>
<path d="M785 540L795 540 788 595 775 595Z" fill="#4c5a58"/>
</g>
<g fill="#10123a" stroke="#10123a" stroke-width="10" stroke-linejoin="round" filter="url(#lk)">
<path d="M288 472L330 462 380 460 420 457 445 482 470 497 494 490 470 520 445 550 425 588 385 603 350 568 310 528 288 492Z"/>
<path d="M617 422L648 414 654 450 663 490 658 540 688 570 712 590 712 612 660 612 600 636 568 636 548 600 524 575 547 515 577 500 572 465 592 440Z"/>
<path d="M988 198L1030 198 1058 226 1078 247 1148 252 1157 275 1143 300 1090 283 1047 268 1040 240 992 218Z"/>
<path d="M827 572L838 577 836 620 825 646 818 620Z" stroke-width="4" fill="#13153a"/>
<path d="M877 617L893 620 888 658 872 664 870 640Z" stroke-width="4" fill="#13153a"/>
<path d="M926 627L938 632 933 663 922 663Z" stroke="#2a3244" stroke-width="3" fill="#2a3244"/>
<ellipse cx="615" cy="860" rx="20" ry="10" stroke-width="0" fill="#1a1430"/>
<ellipse cx="1135" cy="992" rx="18" ry="15" stroke-width="0" fill="#1a1430"/>
<ellipse cx="1185" cy="990" rx="10" ry="12" stroke-width="0" fill="#1a1430"/>
</g>
<g fill="#cfc2fb" filter="url(#cl)">
<ellipse cx="430" cy="1322" rx="18" ry="7"/><ellipse cx="480" cy="1332" rx="18" ry="10"/><ellipse cx="525" cy="1312" rx="12" ry="14"/><ellipse cx="558" cy="1322" rx="8" ry="18"/><ellipse cx="475" cy="1302" rx="6" ry="8"/><ellipse cx="505" cy="1340" rx="8" ry="5"/>
<ellipse cx="680" cy="1378" rx="12" ry="8"/><ellipse cx="698" cy="1358" rx="5" ry="10"/><ellipse cx="645" cy="1375" rx="5" ry="5"/>
<ellipse cx="280" cy="1222" rx="7" ry="10"/><ellipse cx="315" cy="1260" rx="7" ry="9"/><ellipse cx="215" cy="1222" rx="6" ry="4"/><ellipse cx="375" cy="1262" rx="3" ry="16"/><ellipse cx="355" cy="1290" rx="4" ry="5"/>
<ellipse cx="400" cy="1195" rx="6" ry="9"/><ellipse cx="420" cy="1222" rx="10" ry="4"/><ellipse cx="395" cy="1170" rx="4" ry="4"/><ellipse cx="525" cy="1145" rx="4" ry="6" opacity=".7"/>
<ellipse cx="100" cy="1195" rx="6" ry="10"/><ellipse cx="128" cy="1200" rx="4" ry="18"/><ellipse cx="108" cy="1240" rx="3" ry="10"/><ellipse cx="160" cy="1210" rx="4" ry="6"/><ellipse cx="75" cy="1180" rx="3" ry="6"/><ellipse cx="145" cy="1185" rx="4" ry="6"/>
<ellipse cx="160" cy="1100" rx="6" ry="5"/><ellipse cx="195" cy="1130" rx="10" ry="5"/><ellipse cx="197" cy="1080" rx="3" ry="4"/><ellipse cx="175" cy="1128" rx="5" ry="4"/>
<ellipse cx="880" cy="1132" rx="9" ry="6"/><ellipse cx="900" cy="1155" rx="3" ry="4"/>
<ellipse cx="1120" cy="855" rx="10" ry="6"/><ellipse cx="1105" cy="868" rx="6" ry="4"/>
<ellipse cx="1250" cy="970" rx="16" ry="5"/><ellipse cx="1280" cy="990" rx="8" ry="6"/>
<ellipse cx="515" cy="120" rx="6" ry="6" opacity=".45"/><ellipse cx="570" cy="125" rx="5" ry="4" opacity=".5"/><ellipse cx="680" cy="185" rx="4" ry="4" opacity=".5"/><ellipse cx="1215" cy="500" rx="4" ry="4" opacity=".5"/><ellipse cx="1100" cy="380" rx="4" ry="4" opacity=".5"/><ellipse cx="175" cy="820" rx="3" ry="3" opacity=".8"/><ellipse cx="155" cy="910" rx="4" ry="4" opacity=".6"/><ellipse cx="408" cy="712" rx="3" ry="3" opacity=".6"/><ellipse cx="1290" cy="745" rx="5" ry="3" opacity=".6"/><ellipse cx="1190" cy="1320" rx="5" ry="5" opacity=".45"/>
</g>
</g>
</g>
<rect x="686" y="730" width="2.500" height="9" fill="#1c8ad8"/>

<!-- sticker -->
<g transform="translate(1770,670) scale(.33333)">
<rect x="40" y="10" width="383" height="470" fill="#fff" opacity=".85" filter="url(#b4)"/>
<ellipse cx="235" cy="412" rx="122" ry="46" fill="#fbdcd8"/>
<path d="M147 255c5 40 17 95 27 135 10 12 15 5 18-20 30-5 55-5 75 0 5 25 17 30 27 20 10-45 10-100-5-155" fill="#fff" stroke="#9a6450" stroke-width="4"/>
<ellipse cx="213" cy="188" rx="106" ry="82" fill="#fff" stroke="#9a6450" stroke-width="4"/>
<path d="M147 255c8-10 25 10 30 30M245 250c5-20 20-20 25-5" fill="#fff" stroke="#9a6450" stroke-width="4"/>
<path d="M103 190C108 130 150 93 212 93S322 130 332 190" fill="none" stroke="#8a6a60" stroke-width="9"/>
<path d="M105 160c-15 25-15 70 5 100 8 0 12-4 12-10-10-30-10-60-4-90z" fill="#8ce4e8" stroke="#9a6450" stroke-width="3"/>
<path d="M322 160c15 25 12 65-8 95-6 0-10-2-10-8 10-30 8-60 4-88z" fill="#8ce4e8" stroke="#9a6450" stroke-width="3"/>
<path d="M205 95V82M205 82c-10-12-20-12-25-8 3 12 15 16 25 8zM207 82c8-12 15-14 22-10-2 12-12 16-22 10z" fill="#7cc464" stroke="#5a9a48" stroke-width="2"/>
<ellipse cx="152" cy="192" rx="14" ry="8" fill="#fbd0cc"/><ellipse cx="264" cy="196" rx="14" ry="8" fill="#fbd0cc"/>
<path d="M158 180l14-4 16 6M190 186c3 8 10 8 15 2 3 7 12 6 15-1M226 184l14-6 14 6" fill="none" stroke="#8a5a48" stroke-width="3"/>
<text x="122" y="434" font-family="Noto Sans CJK SC,sans-serif" font-size="56" fill="#8a5240">中</text>
<text x="183" y="428" font-family="Liberation Sans,sans-serif" font-size="32" fill="#8a5240">o,</text>
<text x="228" y="438" font-family="Noto Sans CJK SC,sans-serif" font-size="52" fill="#8a5240">简</text>
<path d="M296 406l14-7 8 5 8-5 16 7-7 14-6-3v20h-24v-20l-6 3z" fill="#5a2e14"/>
<text x="60" y="62" font-family="Liberation Sans,sans-serif" font-size="36" font-weight="bold" fill="#b09a90">!</text>
<text x="66" y="122" font-family="DejaVu Sans,sans-serif" font-size="54" font-weight="bold" fill="#9a7a70">♫</text>
<text x="318" y="114" font-family="DejaVu Sans,sans-serif" font-size="44" font-weight="bold" fill="#9a7a70">♪</text>
<text x="368" y="98" font-family="DejaVu Sans,sans-serif" font-size="58" font-weight="bold" fill="#9a7a70">♫</text>
</g>
<!-- status close -->
<path d="M1875 1017l13 13M1888 1017l-13 13" stroke="#111" stroke-width="2"/>
<rect x="1898" y="1019" width="13" height="11" fill="#e0e0e0" stroke="#bbb"/><path d="M1902 1024v6" stroke="#222" stroke-width="2"/>
</svg>
</div>
</body></html>
